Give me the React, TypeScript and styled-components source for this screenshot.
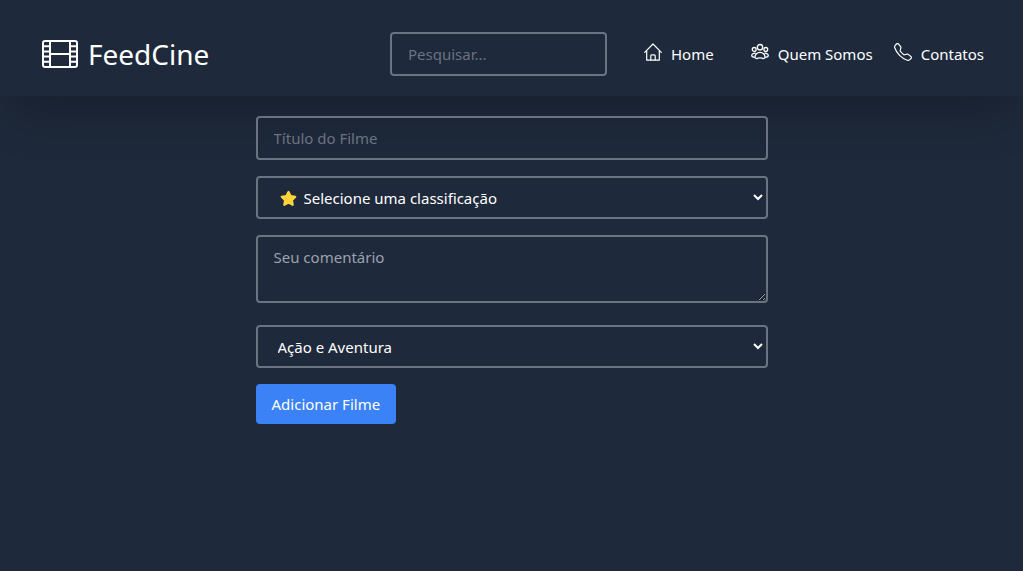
import React from 'react';
import styled, { createGlobalStyle, css } from 'styled-components';
import { BsTelephone } from 'react-icons/bs';

const GlobalStyle = createGlobalStyle`
  *, *::before, *::after { box-sizing: border-box; }
  body {
    margin: 0;
    background: #1e293b;
    color: #fff;
    font: 15px/24px "Noto Sans", "Open Sans", sans-serif;
  }
  input, select, textarea, button { font: inherit; }
`;

const Header = styled.header`
  display: flex;
  flex-wrap: wrap;
  align-items: center;
  gap: 16px 37px;
  padding: 32px 39px 20px 42px;
  box-shadow: 0 25px 50px -12px rgba(0, 0, 0, 0.25);
`;

const Logo = styled.a`
  display: flex;
  align-items: center;
  gap: 10px;
  margin-right: auto;
  color: #fff;
  font-size: 28px;
  line-height: 40px;
  text-decoration: none;
`;

const fieldStyle = css`
  display: block;
  width: 100%;
  padding: 8px 16px;
  border: 2px solid #6b7280;
  border-radius: 4px;
  background: transparent;
  color: #fff;
`;

const TextField = styled.input`
  ${fieldStyle}
  height: 44px;
  &::placeholder { color: #6b7280; opacity: 1; }
`;

const Search = styled.form`
  width: 217px;
`;

const Nav = styled.nav`
  display: flex;
  flex-wrap: wrap;
  gap: 21px;
`;

const NavLink = styled.a<{ $spaced?: boolean }>`
  display: flex;
  gap: 9px;
  margin-right: ${({ $spaced }) => ($spaced ? '16px' : '0')};
  color: #fff;
  text-decoration: none;
  svg { flex: none; margin-top: 1px; }
`;

const MovieForm = styled.form`
  display: flex;
  flex-direction: column;
  align-items: flex-start;
  gap: 16px;
  width: 100%;
  max-width: 512px;
  margin: 20px auto;
`;

const SelectBox = styled.div`
  position: relative;
  width: 100%;
  svg {
    position: absolute;
    left: 24px;
    top: 14px;
    pointer-events: none;
  }
`;

const Select = styled.select<{ $withIcon?: boolean }>`
  ${fieldStyle}
  height: 43px;
  padding: 8px 0 8px ${({ $withIcon }) => ($withIcon ? '42px' : '16px')};
  option { background: #1e293b; }
`;

const Comment = styled.textarea`
  ${fieldStyle}
  height: 68px;
  margin-bottom: 6px;
  resize: both;
  &::placeholder { color: #9ca3af; opacity: 1; }
`;

const SubmitButton = styled.button`
  padding: 8px 16px;
  border: 0;
  border-radius: 4px;
  background: #3b82f6;
  color: #fff;
  cursor: pointer;
`;

const FilmIcon = () => (
  <svg width="36" height="28" viewBox="0 0 36 28" fill="none" stroke="currentColor" strokeWidth="2" aria-hidden="true">
    <rect x="1" y="1" width="34" height="26" rx="2" />
    <path d="M8 1v26M28 1v26M8 14h20" />
    <path d="M1 6.2h7M1 11.4h7M1 16.6h7M1 21.8h7M28 6.2h7M28 11.4h7M28 16.6h7M28 21.8h7" />
  </svg>
);

const HomeIcon = () => (
  <svg
    width="18"
    height="18"
    viewBox="0 0 18 18"
    fill="none"
    stroke="currentColor"
    strokeWidth="1.2"
    strokeLinecap="round"
    strokeLinejoin="round"
    aria-hidden="true"
  >
    <path d="M.7 9.300L9 1l8.300 8.300" />
    <path d="M2.700 8v9.200h12.600V8" />
    <path d="M6.800 17v-4.200c0-.6.4-1 1-1h2.400c.6 0 1 .4 1 1V17" />
  </svg>
);

const PeopleIcon = () => (
  <svg width="18" height="18" viewBox="0 0 18 18" fill="none" stroke="currentColor" strokeWidth="1.3" aria-hidden="true">
    <circle cx="9" cy="4.2" r="2.7" />
    <circle cx="3.2" cy="6.4" r="1.9" />
    <circle cx="14.8" cy="6.4" r="1.9" />
    <path d="M9 9.3c-2.7 0-5 2.3-5 4.6 0 1.3 1 1.8 2.1 1.6 1-.2 1.9-.6 2.9-.6s1.9.4 2.9.6c1.1.2 2.1-.3 2.1-1.6 0-2.3-2.3-4.6-5-4.6z" />
    <path d="M4.600 10.300C2.600 10 .8 11 .7 12.600c0 1 1 1.700 3.200 1.700M13.400 10.300c2-.3 3.800.7 3.900 2.300 0 1-1 1.700-3.200 1.700" />
  </svg>
);

const StarIcon = () => (
  <svg width="17" height="17" viewBox="0 0 17 17" aria-hidden="true">
    <path
      d="M8.500 1.900l2.100 4.200 4.700.7-3.400 3.300.8 4.700-4.200-2.200-4.200 2.200.8-4.700L1.700 6.800l4.700-.7z"
      fill="#ffd43b"
      stroke="#ffd43b"
      strokeWidth="2.200"
      strokeLinejoin="round"
    />
  </svg>
);

export default function App() {
  return (
    <>
      <GlobalStyle />
      <Header>
        <Logo href="#">
          <FilmIcon />
          FeedCine
        </Logo>
        <Search role="search">
          <TextField type="search" placeholder="Pesquisar..." aria-label="Pesquisar" />
        </Search>
        <Nav>
          <NavLink href="#home" $spaced>
            <HomeIcon />
            Home
          </NavLink>
          <NavLink href="#quem-somos">
            <PeopleIcon />
            Quem Somos
          </NavLink>
          <NavLink href="#contatos">
            <BsTelephone size={18} />
            Contatos
          </NavLink>
        </Nav>
      </Header>
      <main>
        <MovieForm>
          <TextField type="text" placeholder="Título do Filme" aria-label="Título do Filme" />
          <SelectBox>
            <Select $withIcon aria-label="Classificação" defaultValue="">
              <option value="">Selecione uma classificação</option>
            </Select>
            <StarIcon />
          </SelectBox>
          <Comment placeholder="Seu comentário" aria-label="Seu comentário" />
          <Select aria-label="Gênero">
            <option>Ação e Aventura</option>
          </Select>
          <SubmitButton type="button">Adicionar Filme</SubmitButton>
        </MovieForm>
      </main>
    </>
  );
}
